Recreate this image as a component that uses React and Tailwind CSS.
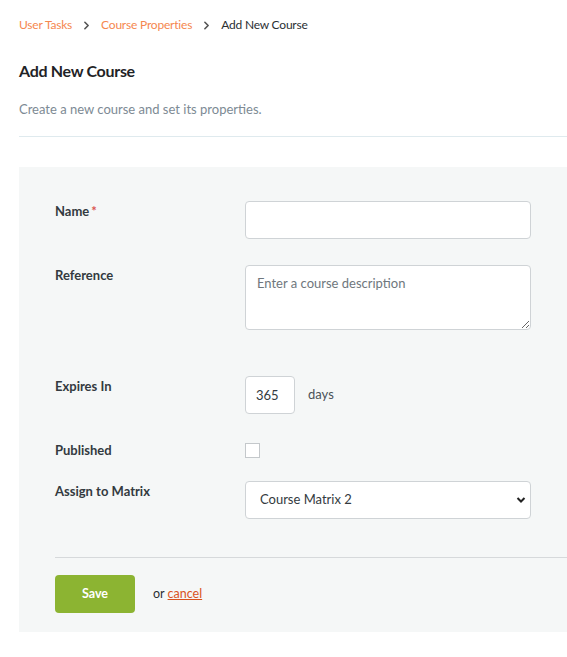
import React, { useState } from 'react';
import { ChevronRight } from 'lucide-react';

const Field = ({ label, required, className = '', children }) => (
  <div className={`flex ${className}`}>
    <label className="w-[190px] shrink-0 text-[13px] leading-5 font-bold text-[#333a40]">
      {label}
      {required && <span className="ml-0.5 text-[#d9534f]">*</span>}
    </label>
    <div className="flex-1">{children}</div>
  </div>
);

const App = () => {
  const [form, setForm] = useState({
    name: '',
    reference: '',
    expires: '365',
    published: false,
    matrix: 'Course Matrix 2',
  });

  const handleChange = (e) => {
    const { name, value, type, checked } = e.target;
    setForm(prev => ({ ...prev, [name]: type === 'checkbox' ? checked : value }));
  };

  return (
    <div className="min-h-screen bg-white font-['Lato',sans-serif] text-[#333a40] overflow-hidden">
      {/* Breadcrumb */}
      <nav className="flex items-center pl-[19px] pt-[16px] text-[12px] leading-[18px] tracking-[-0.2px]">
        <a href="#" className="text-[#f5874f]">User Tasks</a>
        <ChevronRight className="mx-[8px] h-[13px] w-[13px] text-[#555]" strokeWidth={3} />
        <a href="#" className="text-[#f5874f]">Course Properties</a>
        <ChevronRight className="mx-[8px] h-[13px] w-[13px] text-[#555]" strokeWidth={3} />
        <span className="text-[#2b2f33]">Add New Course</span>
      </nav>

      {/* Header */}
      <div className="ml-[19px] mt-[25px] border-b border-[#dfeaee] pb-[17px]">
        <h1 className="text-[16px] leading-6 font-bold tracking-[-0.3px] text-[#1f2326]">Add New Course</h1>
        <p className="mt-[16px] text-[13px] leading-5 text-[#7d8a94]">
          Create a new course and set its properties.
        </p>
      </div>

      {/* Form panel */}
      <div className="ml-[19px] mt-[30px] bg-[#f5f7f7] pl-[36px] pt-[34px] pb-[19px]">
        <Field label="Name" required>
          <input
            type="text"
            name="name"
            value={form.name}
            onChange={handleChange}
            className="block h-[38px] w-[286px] rounded-[4px] border border-[#cfd3d6] bg-white px-[11px] text-[13px] outline-none"
          />
        </Field>

        <Field label="Reference" className="mt-[26px]">
          <textarea
            name="reference"
            value={form.reference}
            onChange={handleChange}
            placeholder="Enter a course description"
            className="block h-[65px] w-[286px] rounded-[4px] border border-[#cfd3d6] bg-white px-[11px] py-[7px] text-[13px] leading-5 outline-none placeholder:text-[#6f777d]"
          />
        </Field>

        <Field label="Expires In" className="mt-[46px]">
          <div className="flex items-center">
            <input
              type="text"
              name="expires"
              value={form.expires}
              onChange={handleChange}
              className="block h-[38px] w-[50px] rounded-[4px] border border-[#cfd3d6] bg-white px-[10px] text-[13px] text-[#333a40] outline-none"
            />
            <span className="ml-[13px] text-[13px] text-[#4a5157]">days</span>
          </div>
        </Field>

        <Field label="Published" className="mt-[26px]">
          <input
            type="checkbox"
            name="published"
            checked={form.published}
            onChange={handleChange}
            className="mt-[3px] block h-[15px] w-[15px] appearance-none border border-[#c4c8cb] bg-white"
          />
        </Field>

        <Field label="Assign to Matrix" className="mt-[21px]">
          <div className="relative w-[286px]">
            <select
              name="matrix"
              value={form.matrix}
              onChange={handleChange}
              className="block h-[38px] w-full appearance-none rounded-[4px] border border-[#cfd3d6] bg-white pl-[14px] text-[13px] text-[#333a40] outline-none"
            >
              <option>Course Matrix 1</option>
              <option>Course Matrix 2</option>
              <option>Course Matrix 3</option>
            </select>
            <svg className="pointer-events-none absolute right-[5px] top-[15px] h-[8px] w-[10px]" viewBox="0 0 10 8">
              <path d="M1.5 2 L5 5.5 L8.5 2" fill="none" stroke="#222" strokeWidth="2" />
            </svg>
          </div>
        </Field>

        <div className="mt-[38px] border-t border-[#d6d9db] pt-[17px] flex items-center">
          <button className="h-[38px] w-[80px] rounded-[4px] bg-[#8cb432] text-[12.5px] font-bold text-white">
            Save
          </button>
          <span className="ml-[18px] text-[12.5px] text-[#2b2f33]">
            or <a href="#" className="text-[#d9531e] underline">cancel</a>
          </span>
        </div>
      </div>
    </div>
  );
};

export default App;
